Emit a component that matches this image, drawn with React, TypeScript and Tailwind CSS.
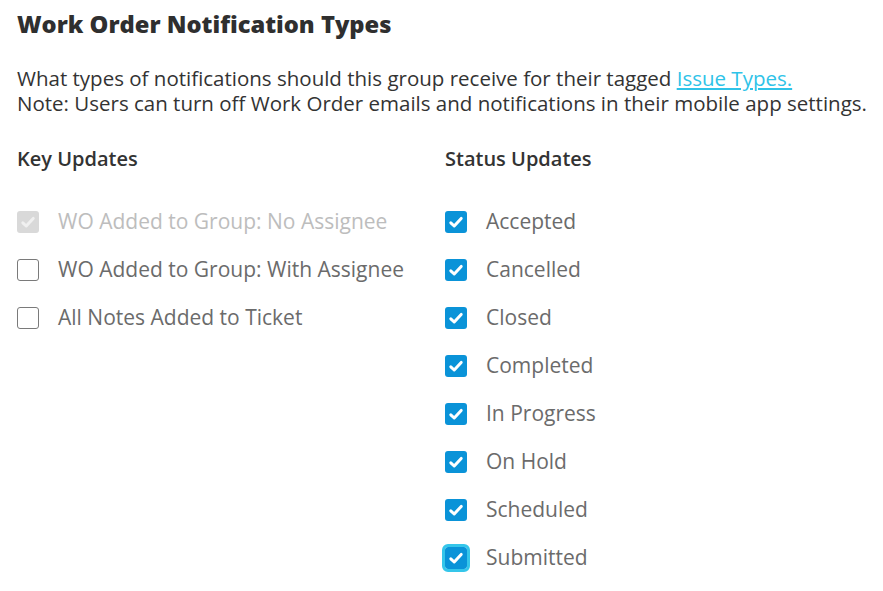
import React from 'react';

type Item = { label: string; checked: boolean; disabled?: boolean; focused?: boolean };

const keyUpdates: Item[] = [
  { label: 'WO Added to Group: No Assignee', checked: true, disabled: true },
  { label: 'WO Added to Group: With Assignee', checked: false },
  { label: 'All Notes Added to Ticket', checked: false },
];

const statusUpdates: Item[] = [
  { label: 'Accepted', checked: true },
  { label: 'Cancelled', checked: true },
  { label: 'Closed', checked: true },
  { label: 'Completed', checked: true },
  { label: 'In Progress', checked: true },
  { label: 'On Hold', checked: true },
  { label: 'Scheduled', checked: true },
  { label: 'Submitted', checked: true, focused: true },
];

function Check({ checked, disabled, focused }: Omit<Item, 'label'>) {
  if (!checked) {
    return <span className="block w-[22px] h-[22px] rounded-[3px] border border-[#7a7a7a] bg-white" />;
  }
  return (
    <span
      className={
        'flex items-center justify-center w-[22px] h-[22px] rounded-[3px] ' +
        (disabled ? 'bg-[#d9d9d9]' : 'bg-[#0a93d8]') +
        (focused ? ' outline-[3px] outline outline-[#35c6ea]' : '')
      }
    >
      <svg viewBox="0 0 16 16" className="w-[16px] h-[16px]" fill="none">
        <path
          d="M2.8 8.8l3.4 3.2L13.2 4.4"
          stroke={disabled ? '#f0f0f0' : '#ffffff'}
          strokeWidth="3"
          strokeLinecap="round"
          strokeLinejoin="round"
        />
      </svg>
    </span>
  );
}

function Column({ title, items }: { title: string; items: Item[] }) {
  return (
    <div className="flex flex-col">
      <h3 className="text-[20px] font-semibold text-[#333] leading-[24px] mb-[40px]">{title}</h3>
      <ul className="flex flex-col gap-[26px]">
        {items.map((it) => (
          <li key={it.label} className="flex items-center gap-[19px] h-[22px]">
            <Check checked={it.checked} disabled={it.disabled} focused={it.focused} />
            <span className={'text-[21px] ' + (it.disabled ? 'text-[#bdbdbd]' : 'text-[#6b6b6b]')}>{it.label}</span>
          </li>
        ))}
      </ul>
    </div>
  );
}

export default function App() {
  return (
    <div className="min-h-screen bg-white px-[17px] pt-[8px] font-['Open_Sans',sans-serif]">
      <h2 className="text-[23.7px] font-extrabold text-[#2f2f2f] leading-[32px]">Work Order Notification Types</h2>
      <div className="mt-[26px] text-[20.5px] leading-[25px] text-[#333]">
        <p className="h-[25px] whitespace-nowrap">
          What types of notifications should this group receive for their tagged{' '}
          <a href="#" className="text-[#2fc3e8] underline">
            Issue Types.
          </a>
        </p>
        <p className="h-[25px] whitespace-nowrap">
          Note: Users can turn off Work Order emails and notifications in their mobile app settings.
        </p>
      </div>
      <div className="mt-[31px] grid grid-cols-[428px_1fr]">
        <Column title="Key Updates" items={keyUpdates} />
        <Column title="Status Updates" items={statusUpdates} />
      </div>
    </div>
  );
}
